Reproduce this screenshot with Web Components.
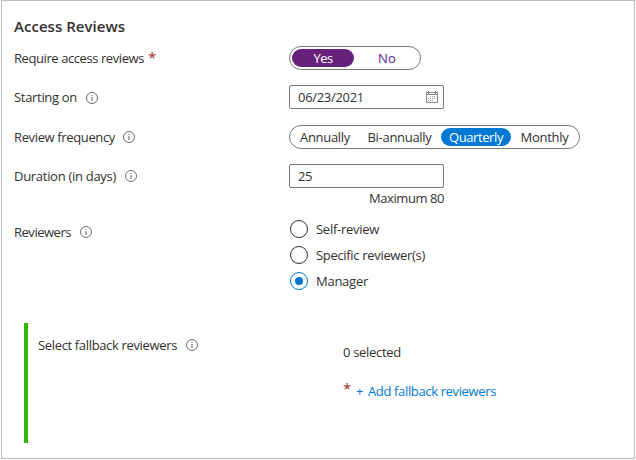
<!DOCTYPE html>
<html lang="en">
<head>
<meta charset="utf-8">
<title>Access Reviews</title>
<style>
html, body { margin: 0; background: #fff; }
body { width: 636px; height: 460px; overflow: hidden; font: 13px/18px "Open Sans", "Noto Sans", sans-serif; color: #323130; }
</style>
</head>
<body>
<access-reviews></access-reviews>
<script>
function define(name, html, init) {
  const template = document.createElement('template');
  template.innerHTML = html.trim();
  customElements.define(name, class extends HTMLElement {
    connectedCallback() {
      if (this.shadowRoot) return;
      this.attachShadow({ mode: 'open' }).append(template.content.cloneNode(true));
      if (init) init(this);
    }
  });
}

/* Text run tracked so that it spans the width given in "w". */
define('ui-text', `<style>:host{display:block;flex:none}span{display:inline-block;white-space:pre;vertical-align:top}</style><span><slot></slot></span>`, el => {
  const span = el.shadowRoot.querySelector('span');
  const w = +el.getAttribute('w');
  if (!w) return;
  const n = el.textContent.length;
  span.style.letterSpacing = ((w - span.getBoundingClientRect().width) / n).toFixed(4) + 'px';
  el.style.width = w + 'px';
});

define('info-icon', `
<style>:host{display:block;width:12px;height:12px;flex:none}svg{display:block}</style>
<svg width="12" height="12" viewBox="0 0 12 12"><circle cx="6" cy="6" r="5.5" fill="none" stroke="#6e6c6a"/><path d="M6 5v4M6 3v1" stroke="#6e6c6a" stroke-width="1.1"/></svg>`);

define('calendar-icon', `
<style>:host{display:block;width:12px;height:12px;flex:none}svg{display:block}</style>
<svg width="12" height="12" viewBox="0 0 12 12" fill="none" stroke="#8a8886"><path d="M.5 1.5h11v10H.5z"/><path d="M0 3.5h12"/><path d="M2.5 0v3M9.5 0v3" stroke="#767472"/><path d="M4 5.5h6M2 7.5h8M2 9.5h6" stroke="#a5a3a1" stroke-dasharray="1 1"/></svg>`);

define('form-row', `
<style>
:host{display:grid;grid-template-columns:275px 1fr;height:39px;align-items:start}
.label{display:flex;align-items:center;gap:9px;height:24px}
</style>
<div class="label"><slot name="label"></slot></div><div><slot></slot></div>`);

define('required-mark', `
<style>:host{display:block;color:#a4262c;font-size:15px;line-height:18px;width:8px}</style>*`);

define('pill-group', `
<style>:host{display:flex;box-sizing:border-box;width:var(--w);height:24px;border:1px solid #7a7876;border-radius:12px;padding:2px}</style>
<slot></slot>`);

define('pill-option', `
<style>
:host{display:flex;box-sizing:border-box;justify-content:center;align-items:center;height:18px;border-radius:9px;width:var(--w);flex:none}
:host([selected]){background:var(--fill);color:#fff}
</style><slot></slot>`);

define('text-field', `
<style>:host{display:flex;box-sizing:border-box;width:155px;height:24px;border:1px solid #7a7876;border-radius:2px;padding:0 5px 0 8px;align-items:center;justify-content:space-between}</style>
<slot></slot>`);

define('radio-option', `
<style>
:host{display:flex;align-items:center;gap:8px;height:26px;padding-left:1px}
i{box-sizing:border-box;width:18px;height:18px;border:1px solid #323130;border-radius:50%;display:grid;place-items:center}
:host([checked]) i{border-color:#0078d4}
:host([checked]) i::after{content:"";width:8px;height:8px;border-radius:50%;background:#0078d4}
</style><i></i><slot></slot>`);

define('fallback-panel', `
<style>
:host{display:grid;grid-template-columns:305px 1fr;box-sizing:border-box;height:120px;margin-left:10px;border-left:4px solid #31b700;padding-left:10px}
.label{display:flex;align-items:center;gap:9px;height:18px;padding-top:13px}
.value{padding-top:20px}
.link{display:flex;gap:5px;color:#0078d4;margin-top:21px}
</style>
<div class="label"><slot name="label"></slot></div>
<div class="value"><slot></slot><div class="link"><slot name="link"></slot></div></div>`);

define('access-reviews', `
<style>
:host{display:block;box-sizing:border-box;width:634px;height:459px;margin-left:1px;border:1px solid #bcbcbc;padding:15px 0 0 12px}
h1{margin:0;font:600 15px/20px "Open Sans","Noto Sans",sans-serif;height:30px}
.note{display:flex;justify-content:flex-end;width:155px;padding-top:1px}
.purple{color:#5c2391}
</style>
<h1><ui-text w="111">Access Reviews</ui-text></h1>
<form-row><ui-text slot="label" w="130">Require access reviews</ui-text><required-mark slot="label" style="margin:-2px 0 0 -5px"></required-mark>
 <pill-group style="--w:132px;--fill:#68217a"><pill-option selected style="--w:62px"><ui-text w="19">Yes</ui-text></pill-option><pill-option class="purple" style="--w:66px"><ui-text w="18">No</ui-text></pill-option></pill-group></form-row>
<form-row style="height:40px"><ui-text slot="label" w="63">Starting on</ui-text><info-icon slot="label" style="padding-top:2px"></info-icon>
 <text-field><ui-text w="66">06/23/2021</ui-text><calendar-icon></calendar-icon></text-field></form-row>
<form-row><ui-text slot="label" w="101">Review frequency</ui-text><info-icon slot="label" style="margin-left:-1px"></info-icon>
 <pill-group style="--w:291px;--fill:#0078d4"><pill-option style="--w:66px"><ui-text w="50">Annually</ui-text></pill-option><pill-option style="--w:83px"><ui-text w="64">Bi-annually</ui-text></pill-option><pill-option selected style="--w:70px"><ui-text w="54">Quarterly</ui-text></pill-option><pill-option style="--w:67px"><ui-text w="48">Monthly</ui-text></pill-option></pill-group></form-row>
<form-row style="height:52px"><ui-text slot="label" w="102">Duration (in days)</ui-text><info-icon slot="label"></info-icon>
 <text-field><ui-text w="14">25</ui-text></text-field><div class="note"><ui-text w="75">Maximum 80</ui-text></div></form-row>
<form-row style="height:107px"><ui-text slot="label" w="57" style="padding-top:8px">Reviewers</ui-text><info-icon slot="label" style="padding-top:8px"></info-icon>
 <radio-option><ui-text w="63">Self-review</ui-text></radio-option><radio-option><ui-text w="109">Specific reviewer(s)</ui-text></radio-option><radio-option checked><ui-text w="52">Manager</ui-text></radio-option></form-row>
<fallback-panel><ui-text slot="label" w="139">Select fallback reviewers</ui-text><info-icon slot="label"></info-icon>
 <ui-text w="58">0 selected</ui-text>
 <required-mark slot="link" style="margin-top:-3px"></required-mark><ui-text slot="link" w="7">+</ui-text><ui-text slot="link" w="128">Add fallback reviewers</ui-text></fallback-panel>`);
</script>
</body>
</html>
